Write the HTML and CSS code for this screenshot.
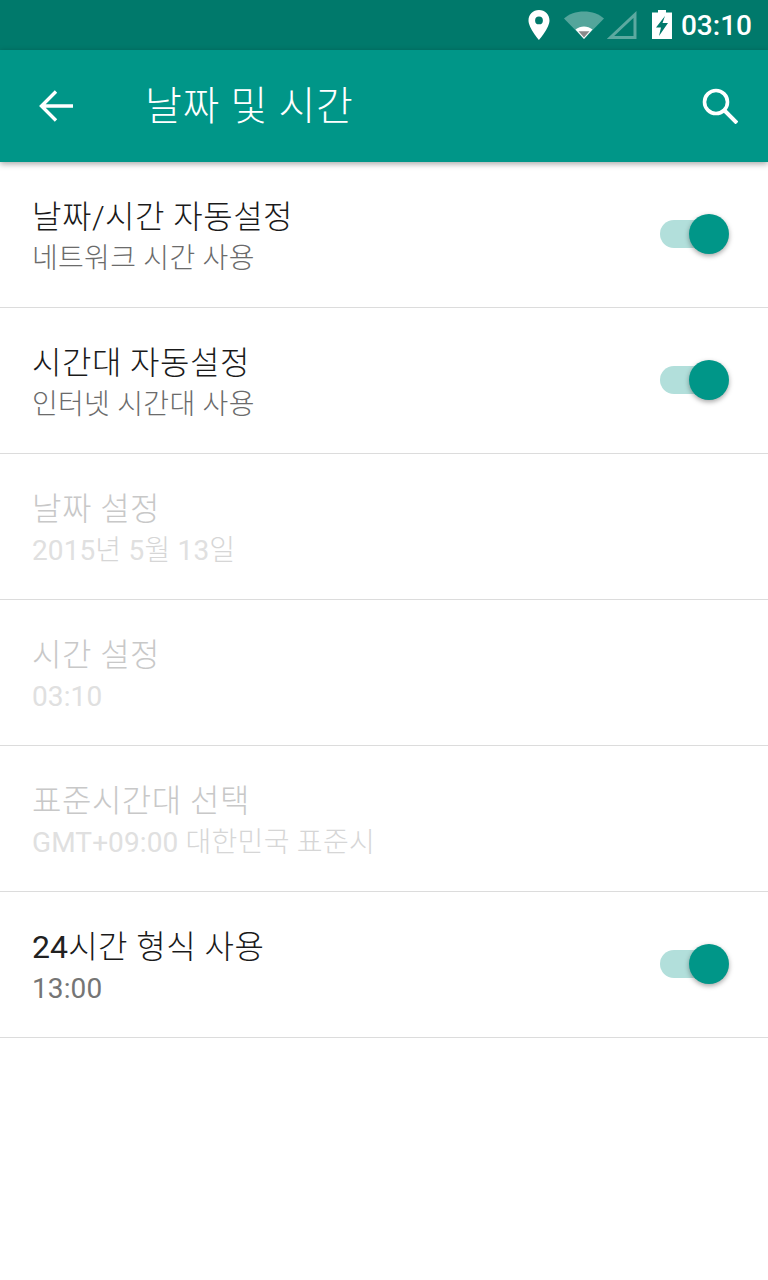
FILE: index.html
```html
<!DOCTYPE html>
<html lang="ko">
<head>
<meta charset="utf-8">
<title>날짜 및 시간</title>
<link rel="stylesheet" href="styles.css">
</head>
<body>
<div class="status">
  <svg class="ic-pin" viewBox="0 0 22 30"><path fill="#fff" fill-rule="evenodd" d="M11 0C5 0 .5 4.600.5 10.500.5 18 11 30 11 30s10.500-12 10.500-19.500C21.500 4.600 17 0 11 0zm0 14.300a3.900 3.900 0 1 1 0-7.800 3.900 3.900 0 0 1 0 7.800z"/></svg>
  <svg class="ic-wifi" viewBox="0 0 40 28"><path fill="#fff" fill-opacity=".33" d="M0 7.500C5 3 12 .5 20 .5S35 3 40 7.500L20 28z"/><path fill="#fff" d="M11.500 18.500C14 16.500 17 15.500 20 15.500s6 1 8.500 3L20 28z"/><path fill="#8a8a8a" d="M14.500 20.200h11L20 26.500z"/></svg>
  <svg class="ic-signal" viewBox="0 0 30 28"><path fill="none" stroke="#fff" stroke-opacity=".36" stroke-width="3" d="M28 3.500V26.500H3.500z"/></svg>
  <svg class="ic-batt" viewBox="0 0 20 29"><path fill="#fff" fill-rule="evenodd" d="M6 0h8v2.500h6V29H0V2.500h6zM13 6L4 17.500h5L7 26l9-13h-5.500z"/></svg>
  <span class="clock">03:10</span>
</div>
<header class="bar">
  <svg class="ic-back" viewBox="0 0 34 32"><path fill="none" stroke="#fff" stroke-width="3.400" d="M34 16H3M17 1.500L2.500 16 17 30.500"/></svg>
  <h1 class="title">날짜 및 시간</h1>
  <svg class="ic-search" viewBox="0 0 36 36"><circle cx="14" cy="14" r="11.500" fill="none" stroke="#fff" stroke-width="3.600"/><path stroke="#fff" stroke-width="4" d="M22.500 22.500L35 35"/></svg>
</header>
<main class="list">
  <div class="row">
    <div class="text"><div class="main">날짜/시간 자동설정</div><div class="sub">네트워크 시간 사용</div></div>
    <div class="switch"><span class="track"></span><span class="thumb"></span></div>
  </div>
  <div class="row">
    <div class="text"><div class="main">시간대 자동설정</div><div class="sub">인터넷 시간대 사용</div></div>
    <div class="switch"><span class="track"></span><span class="thumb"></span></div>
  </div>
  <div class="row off">
    <div class="text"><div class="main">날짜 설정</div><div class="sub"><span class="num">2015</span>년 <span class="num">5</span>월 <span class="num">13</span>일</div></div>
  </div>
  <div class="row off">
    <div class="text"><div class="main">시간 설정</div><div class="sub"><span class="num">03:10</span></div></div>
  </div>
  <div class="row off">
    <div class="text"><div class="main">표준시간대 선택</div><div class="sub"><span class="num">GMT+09:00</span> 대한민국 표준시</div></div>
  </div>
  <div class="row">
    <div class="text"><div class="main"><span class="num">24</span>시간 형식 사용</div><div class="sub"><span class="num">13:00</span></div></div>
    <div class="switch"><span class="track"></span><span class="thumb"></span></div>
  </div>
</main>
</body>
</html>
```
FILE: styles.css
```css
html, body { margin: 0; padding: 0; background: #fff; }
body { width: 768px; height: 1280px; overflow: hidden; font-family: Roboto, "Noto Sans CJK KR", sans-serif; }
.status { height: 50px; background: #00796b; display: flex; align-items: center; color: #fff; box-sizing: border-box; padding-right: 16px; }
.ic-pin { width: 22px; height: 30px; margin-left: 528px; }
.ic-wifi { width: 40px; height: 28px; margin-left: 14px; margin-top: -1px; }
.ic-signal { width: 30px; height: 28px; margin-left: 3px; margin-top: -1px; }
.ic-batt { width: 20px; height: 29px; margin-left: 15px; margin-top: -1px; }
.clock { font-size: 28px; font-weight: 500; margin-left: 9px; line-height: 55px; }
.bar { height: 112px; background: #009688; display: flex; align-items: center; box-shadow: 0 2px 6px rgba(0,0,0,.35); position: relative; }
.ic-back { width: 34px; height: 32px; margin-left: 39px; flex: none; }
.title { flex: 1; margin: 0 0 0 72px; font-size: 40px; font-weight: 300; color: #fff; line-height: 119px; letter-spacing: .7px; }
.ic-search { width: 36px; height: 36px; margin-right: 30px; flex: none; }
.row { height: 145px; border-bottom: 1px solid #dcdcdc; display: flex; align-items: center; padding: 0 39px 0 32px; }
.text { flex: 1; padding-top: 5px; }
.main { font-size: 32px; line-height: 42px; color: #1a1a1a; font-weight: 300; letter-spacing: .5px; }
.sub { font-size: 28px; line-height: 40px; color: #6b6b6b; letter-spacing: .3px; font-weight: 300; position: relative; top: 1px; }
.num { font-weight: 400; letter-spacing: .1px; }
.sub .num { color: #757575; }
.main .num { color: #212121; }
.off .main { color: #c8c8c8; }
.off .sub { color: #d6d6d6; }
.off .sub .num { color: #e0e0e0; }
.switch { position: relative; width: 69px; height: 40px; margin-top: -2px; }
.track { position: absolute; left: 0; top: 6px; width: 58px; height: 28px; border-radius: 14px; background: #b2dfdb; }
.thumb { position: absolute; right: 0; top: 0; width: 40px; height: 40px; border-radius: 50%; background: #009688; box-shadow: 0 2px 5px rgba(0,0,0,.35); }
```
